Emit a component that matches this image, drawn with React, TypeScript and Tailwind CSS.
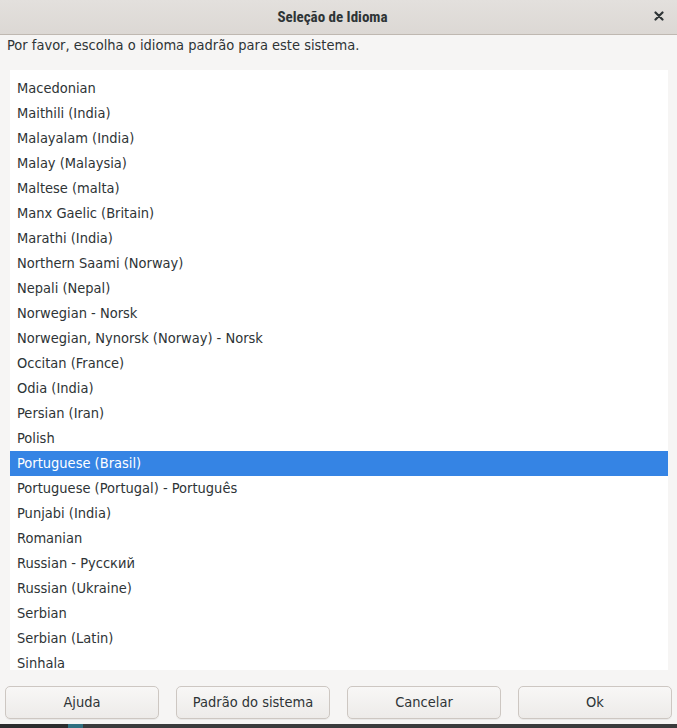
const languages = [
  'Macedonian',
  'Maithili (India)',
  'Malayalam (India)',
  'Malay (Malaysia)',
  'Maltese (malta)',
  'Manx Gaelic (Britain)',
  'Marathi (India)',
  'Northern Saami (Norway)',
  'Nepali (Nepal)',
  'Norwegian - Norsk',
  'Norwegian, Nynorsk (Norway) - Norsk',
  'Occitan (France)',
  'Odia (India)',
  'Persian (Iran)',
  'Polish',
  'Portuguese (Brasil)',
  'Portuguese (Portugal) - Português',
  'Punjabi (India)',
  'Romanian',
  'Russian - Русский',
  'Russian (Ukraine)',
  'Serbian',
  'Serbian (Latin)',
  'Sinhala',
];

const selected = 'Portuguese (Brasil)';

function DialogButton({ label }: { label: string }) {
  return (
    <button className="flex-1 h-[33px] rounded-[5px] border border-[#cdc7c2] bg-gradient-to-b from-[#f8f7f6] to-[#edebe9] text-[#2e3436] text-[14.5px] shadow-[0_1px_0_rgba(0,0,0,0.05)]">
      {label}
    </button>
  );
}

export default function App() {
  return (
    <div
      className="w-[677px] h-[728px] flex flex-col bg-[#2b2c2d] overflow-hidden text-[#2e3436]"
      style={{ fontFamily: '"DejaVu Sans Condensed", "DejaVu Sans", sans-serif' }}
    >
      <div className="h-[724px] flex flex-col bg-[#f6f5f4]">
        {/* title bar */}
        <div className="relative h-[35px] shrink-0 flex items-center justify-center bg-gradient-to-b from-[#e3e0dd] to-[#dcd8d4] border-b border-[#bfb8b1]">
          <span
            className="text-[15px] font-bold text-[#2e3436] -ml-[12px]"
            style={{ fontFamily: '"Roboto Condensed", "DejaVu Sans Condensed", sans-serif' }}
          >
            Seleção de Idioma
          </span>
          <svg className="absolute right-[13px] top-[11px]" width="10" height="10" viewBox="0 0 10 10">
            <path d="M1.5 1.5 L8.5 8.5 M8.5 1.5 L1.5 8.5" stroke="#2e3436" strokeWidth="2.2" strokeLinecap="round" />
          </svg>
        </div>

        <div className="px-[7px] pt-[1px] h-[19px] leading-[18px] text-[14.5px]">
          Por favor, escolha o idioma padrão para este sistema.
        </div>

        <div className="mt-[16px] ml-[10px] mr-[9px] h-[600px] shrink-0 bg-white overflow-hidden pt-[6px]">
          {languages.map((lang) => (
            <div
              key={lang}
              className={
                lang === selected
                  ? 'h-[25px] px-[7px] flex items-center text-[14.5px] bg-[#3584e4] text-white'
                  : 'h-[25px] px-[7px] flex items-center text-[14.5px]'
              }
            >
              {lang}
            </div>
          ))}
        </div>

        <div className="flex gap-[17px] px-[5px] mt-[16px]">
          <DialogButton label="Ajuda" />
          <DialogButton label="Padrão do sistema" />
          <DialogButton label="Cancelar" />
          <DialogButton label="Ok" />
        </div>
      </div>
      <div className="flex-1 flex">
        <div className="w-[68px] bg-[#2b2c2d]" />
        <div className="w-[15px] bg-[#2f6f7f]" />
        <div className="flex-1 bg-[#3a3b3c]" />
      </div>
    </div>
  );
}
